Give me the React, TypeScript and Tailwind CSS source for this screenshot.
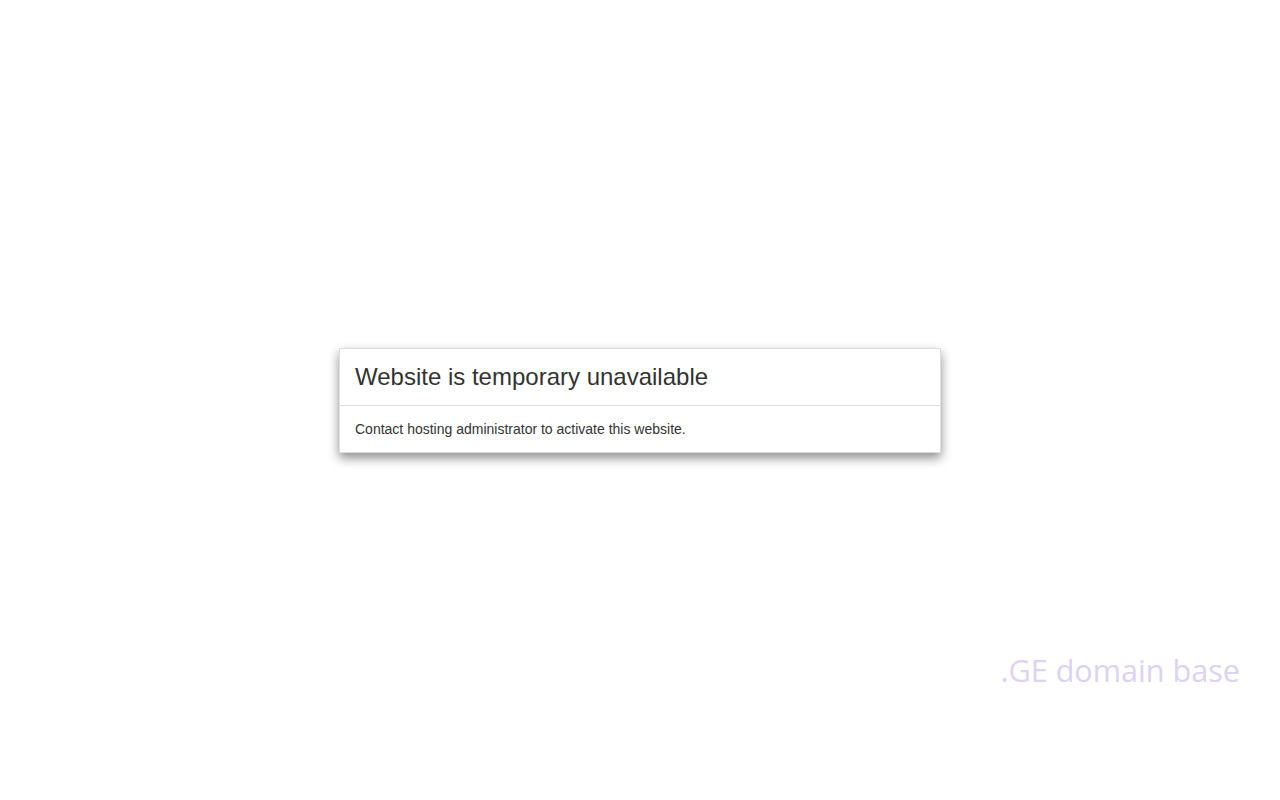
export default function App() {
    return (
        <div className="relative h-[800px] w-full bg-white flex items-center justify-center font-['Liberation_Sans',Arial,sans-serif]">
            <div className="w-[602px] bg-white border border-[#ddd] shadow-[0_5px_10px_rgba(0,0,0,0.45)]">
                <div className="h-[57px] px-[15px] pt-[2px] flex items-center border-b border-[#ddd]">
                    <h3 className="text-[24px] leading-[1.1] text-[#333]">Website is temporary unavailable</h3>
                </div>
                <div className="h-[46px] px-[15px] flex items-center">
                    <p className="text-[14px] leading-[20px] text-[#333]">Contact hosting administrator to activate this website.</p>
                </div>
            </div>
            <div className="absolute right-[40px] top-[650px] font-['Open_Sans',sans-serif] text-[30.6px] leading-[40px] text-[#dcd2f3]">
                .GE domain base
            </div>
        </div>
    );
}
